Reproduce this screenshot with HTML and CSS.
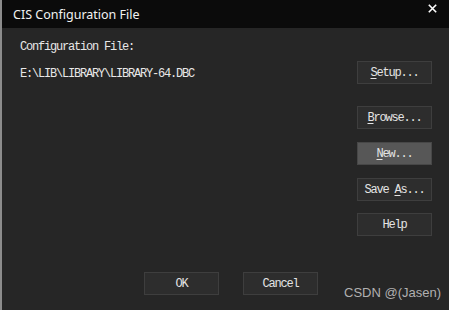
FILE: index.html
```html
<!DOCTYPE html>
<html>
<head>
<meta charset="utf-8">
<link rel="stylesheet" href="styles.css">
</head>
<body>
<div class="window">
  <div class="titlebar">
    <span class="title">CIS Configuration File</span>
    <svg class="close" width="9" height="9" viewBox="0 0 9 9"><path d="M0.8 0.8L8.2 8.2M8.2 0.8L0.8 8.2" stroke="#ffffff" stroke-width="1.6"/></svg>
  </div>
  <div class="content">
    <div class="main">
      <div class="left">
        <div class="label">Configuration File:</div>
        <div class="path">E:\LIB\LIBRARY\LIBRARY-64.DBC</div>
      </div>
      <div class="right">
        <div class="btn b-setup"><span><u>S</u>etup...</span></div>
        <div class="btn b-browse"><span><u>B</u>rowse...</span></div>
        <div class="btn b-new active"><span><u>N</u>ew...</span></div>
        <div class="btn b-save"><span>Save <u>A</u>s...</span></div>
        <div class="btn b-help"><span>Help</span></div>
      </div>
    </div>
    <div class="bottom">
      <div class="btn"><span>OK</span></div>
      <div class="btn"><span>Cancel</span></div>
    </div>
  </div>
  <div class="watermark">CSDN @(Jasen)</div>
</div>
</body>
</html>
```
FILE: styles.css
```css
html, body {
  margin: 0;
  padding: 0;
  background: #262626;
}
.window {
  position: relative;
  width: 449px;
  height: 310px;
  box-sizing: border-box;
  border-left: 2px solid #8c8c8c;
  background: #262626;
  display: flex;
  flex-direction: column;
  overflow: hidden;
}
.titlebar {
  height: 28px;
  flex: none;
  background: #0b0b0b;
  display: flex;
  align-items: flex-start;
  justify-content: space-between;
  padding-left: 11px;
  padding-right: 12px;
}
.title {
  font-family: "Noto Sans", "Open Sans", sans-serif;
  font-size: 12.5px;
  color: #f2f2f2;
  line-height: 14px;
  margin-top: 8px;
}
.close {
  margin-top: 4px;
}
.content {
  flex: 1;
  display: flex;
  flex-direction: column;
}
.main {
  display: flex;
  justify-content: space-between;
  padding-left: 18px;
  padding-right: 17px;
}
.left {
  font-family: "Liberation Mono", monospace;
  font-size: 12px;
  letter-spacing: -1.2px;
  color: #e8e8e8;
  line-height: 12px;
  padding-top: 13px;
}
.path {
  margin-top: 15px;
}
.right {
  display: flex;
  flex-direction: column;
  padding-top: 33px;
}
.btn {
  width: 75px;
  height: 23px;
  box-sizing: border-box;
  border: 1px solid #3e3e3e;
  background: #2d2d2d;
  color: #e4e4e4;
  font-family: "Liberation Mono", monospace;
  font-size: 12px;
  letter-spacing: -1.2px;
  display: flex;
  align-items: center;
  justify-content: center;
  white-space: pre;
}
.btn u {
  text-underline-offset: 2px;
}
.btn.active {
  background: #575757;
  border-color: #474747;
}
.b-browse { margin-top: 22px; }
.b-new { margin-top: 13px; }
.b-save { margin-top: 13px; }
.b-help { margin-top: 12px; }
.bottom {
  display: flex;
  gap: 24px;
  padding-left: 142px;
  margin-top: 36px;
}
.watermark {
  position: absolute;
  left: 342px;
  top: 285px;
  font-family: "Liberation Sans", Arial, sans-serif;
  font-size: 13px;
  color: #b0b0b0;
  line-height: 15px;
}
```
